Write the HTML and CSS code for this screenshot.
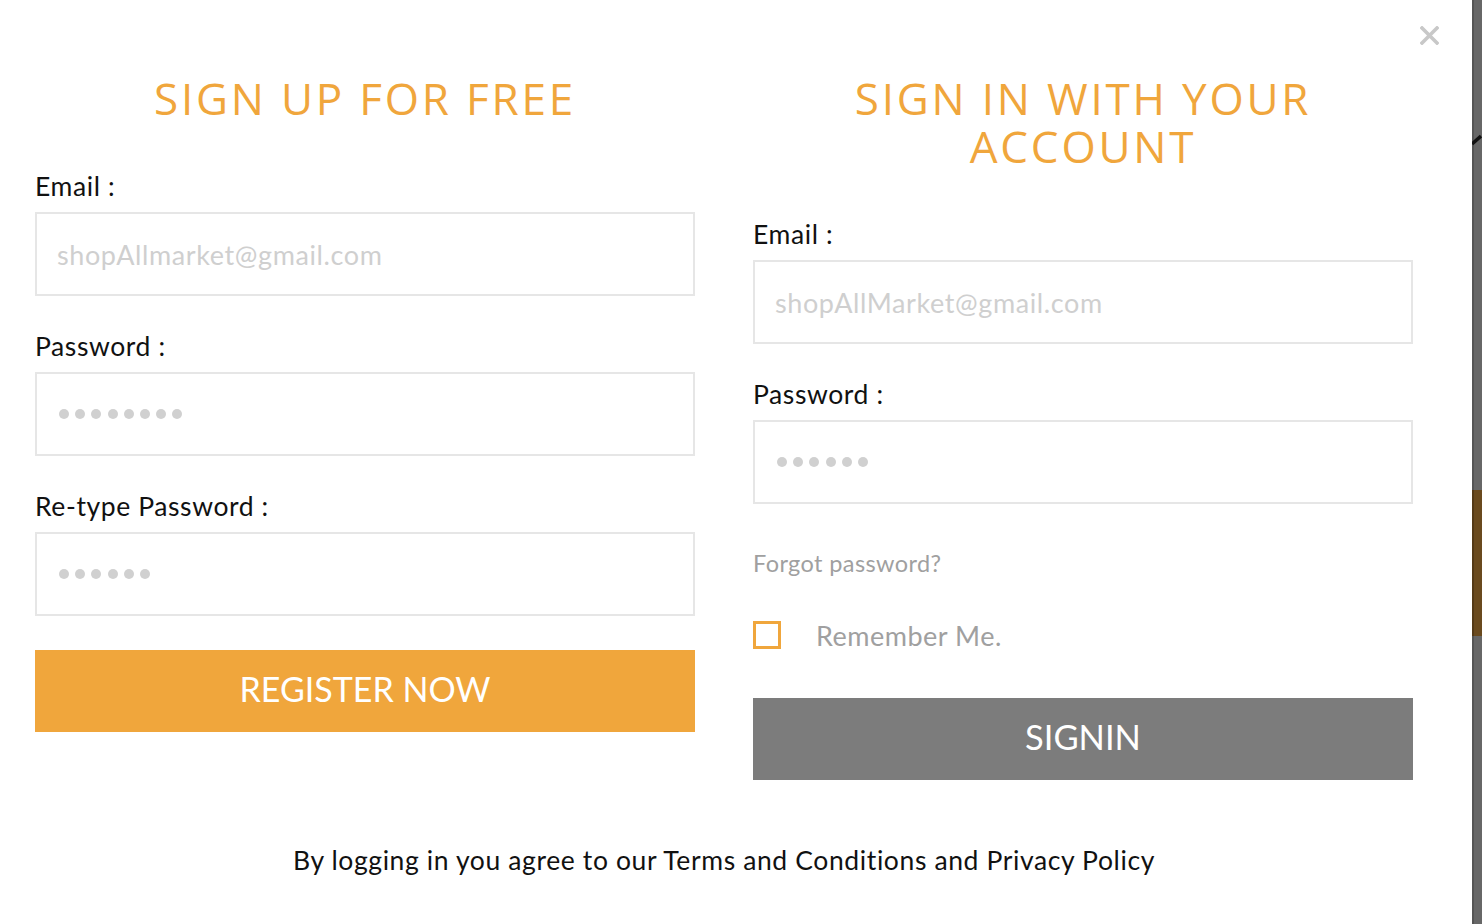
FILE: index.html
```html
<!DOCTYPE html>
<html lang="en">
<head>
<meta charset="utf-8">
<title>Sign up / Sign in</title>
<link rel="stylesheet" href="styles.css">
</head>
<body>
<div class="modal">
  <button class="close" aria-label="Close">
    <svg width="19" height="19" viewBox="0 0 19 19"><path d="M2 2 L17 17 M17 2 L2 17" stroke="#c8c8c8" stroke-width="3.6" stroke-linecap="square"/></svg>
  </button>
  <div class="cols">
    <section class="col">
      <h2 class="title"><span class="line">SIGN UP FOR FREE</span></h2>
      <div class="label">Email :</div>
      <div class="field placeholder">shopAllmarket@gmail.com</div>
      <div class="label">Password :</div>
      <div class="field dots"><i></i><i></i><i></i><i></i><i></i><i></i><i></i><i></i></div>
      <div class="label">Re-type Password :</div>
      <div class="field dots"><i></i><i></i><i></i><i></i><i></i><i></i></div>
      <div class="btn btn-orange">REGISTER NOW</div>
    </section>
    <section class="col">
      <h2 class="title"><span class="line">SIGN IN WITH YOUR</span><span class="line">ACCOUNT</span></h2>
      <div class="label">Email :</div>
      <div class="field placeholder">shopAllMarket@gmail.com</div>
      <div class="label">Password :</div>
      <div class="field dots"><i></i><i></i><i></i><i></i><i></i><i></i></div>
      <div class="forgot">Forgot password?</div>
      <label class="remember"><span class="check"></span><span>Remember Me.</span></label>
      <div class="btn btn-gray">SIGNIN</div>
    </section>
  </div>
  <p class="terms">By logging in you agree to our Terms and Conditions and Privacy Policy</p>
</div>
<div class="strip">
  <div class="strip-gap1"></div>
  <svg class="mark" width="10" height="14" viewBox="0 0 10 14"><path d="M0 12 L9 4" stroke="#111" stroke-width="3.5"/></svg>
  <div class="strip-gap2"></div>
  <div class="brown"></div>
</div>
</body>
</html>
```
FILE: styles.css
```css
html, body {
  margin: 0;
  padding: 0;
}
body {
  display: flex;
  width: 1482px;
  height: 924px;
  overflow: hidden;
  background: #666;
  font-family: Lato, "Open Sans", sans-serif;
}
.modal {
  position: relative;
  width: 1472px;
  height: 924px;
  flex: none;
  box-sizing: border-box;
  background: #fff;
  padding: 74px 59px 0 35px;
}
.close {
  position: absolute;
  top: 26px;
  right: 33px;
  width: 19px;
  height: 19px;
  padding: 0;
  border: 0;
  background: none;
  display: block;
}
.close svg { display: block; }
.cols {
  display: grid;
  grid-template-columns: 660px 660px;
  column-gap: 58px;
}
.col {
  display: flex;
  flex-direction: column;
}
.title {
  margin: 0 0 49px;
  font-family: "Open Sans", sans-serif;
  font-weight: 400;
  font-size: 44px;
  letter-spacing: 2.8px;
  color: #f0a63c;
  text-align: center;
}
.title .line {
  display: block;
  height: 48px;
  line-height: 48px;
}
.label {
  font-size: 26.5px;
  letter-spacing: 0.6px;
  line-height: 30px;
  color: #111;
  margin-bottom: 11px;
}
.field {
  height: 84px;
  box-sizing: border-box;
  border: 2px solid #e6e6e6;
  margin-bottom: 35px;
  display: flex;
  align-items: center;
  padding-left: 20px;
}
.placeholder {
  font-size: 27px;
  letter-spacing: 0.6px;
  color: #cfcfcf;
}
.dots {
  padding-left: 22px;
  gap: 6.2px;
}
.dots i {
  width: 10px;
  height: 10px;
  border-radius: 50%;
  background: #d0d0d0;
}
.btn {
  height: 82px;
  box-sizing: border-box;
  padding-bottom: 5px;
  display: flex;
  align-items: center;
  justify-content: center;
  color: #fff;
  font-size: 34px;
}
.btn-orange { background: #f0a63c; margin-top: -1px; }
.btn-gray { background: #7c7c7c; font-size: 34.5px; }
.forgot {
  margin-top: 9px;
  font-size: 23.5px;
  letter-spacing: 0.4px;
  line-height: 30px;
  color: #a0a0a0;
}
.remember {
  margin-top: 42px;
  margin-bottom: 48px;
  height: 30px;
  display: flex;
  align-items: center;
  font-size: 27px;
  letter-spacing: 0.5px;
  color: #a0a0a0;
}
.check {
  width: 28px;
  height: 28px;
  box-sizing: border-box;
  border: 3px solid #f0a63c;
  margin-right: 35px;
}
.terms {
  margin: 65px 0 0;
  font-size: 26.5px;
  letter-spacing: 0.62px;
  line-height: 30px;
  color: #111;
  text-align: center;
}
.strip {
  width: 10px;
  flex: none;
  display: flex;
  flex-direction: column;
  background: linear-gradient(to right, #555 0 2px, #676767 2px);
}
.strip-gap1 { height: 132px; }
.mark { display: block; }
.strip-gap2 { height: 344px; }
.brown {
  height: 146px;
  background: linear-gradient(to right, #543a17 0 2px, #6a4a1e 2px);
}
```
